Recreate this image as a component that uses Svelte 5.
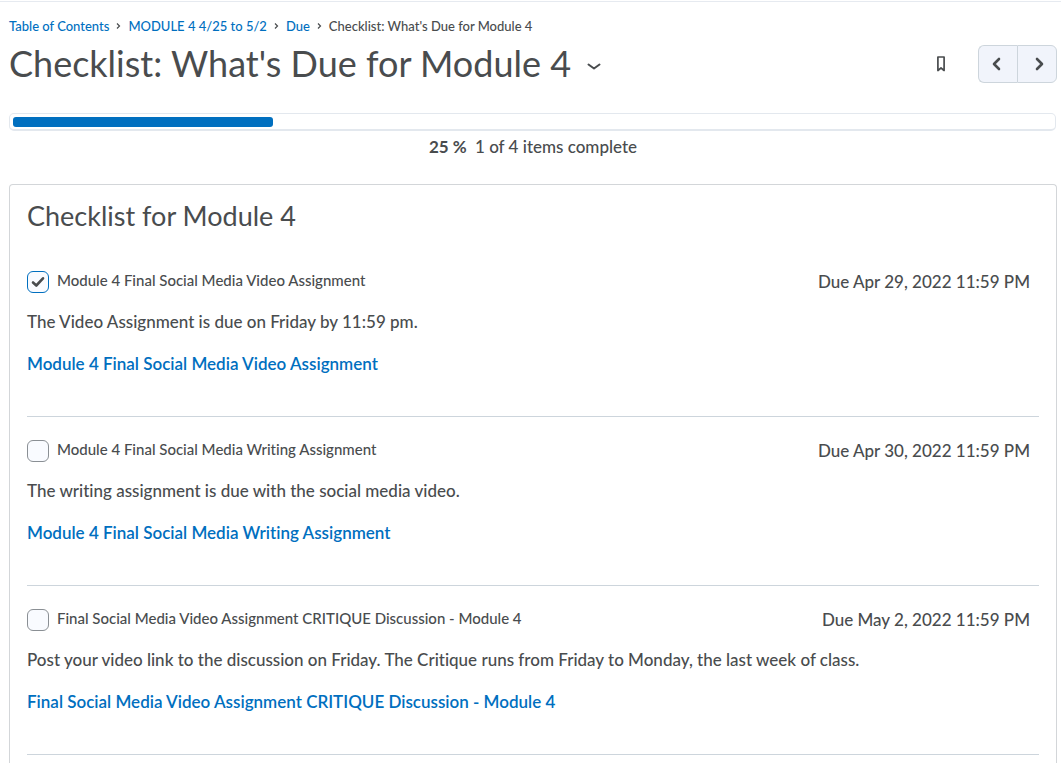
<div class="page">
  <header>
    <nav class="breadcrumbs" aria-label="Breadcrumb">
      {#each crumbs as crumb}
        <a href="#top">{crumb}</a>
        <svg width="5" height="8" viewBox="0 0 5 8">
          <path d="M1 1.500l2.500 2.500L1 6.500" fill="none" stroke="#494c4e" stroke-width="1.200"/>
        </svg>
      {/each}
      <span>{title}</span>
    </nav>

    <div class="titleBar">
      <h1>{title}</h1>
      <button class="plain actions" aria-label="Topic actions">
        <svg width="14" height="8" viewBox="0 0 14 8">
          <path d="M1.500 1.500L7 5.500l5.500-4" fill="none" stroke="#494c4e" stroke-width="2" stroke-linecap="round" stroke-linejoin="round"/>
        </svg>
      </button>
      <button class="plain bookmark" aria-label="Bookmark">
        <svg width="8" height="16" viewBox="0 0 8 16">
          <path d="M.9 1h6.200v13.500L4 12l-3.100 2.500z" fill="none" stroke="#494c4e" stroke-width="1.700" stroke-linejoin="round"/>
        </svg>
      </button>
      <div class="pager">
        <button aria-label="Previous">
          <svg width="10" height="14" viewBox="0 0 10 14">
            <path d="M7 2L2 7l5 5" fill="none" stroke="#494c4e" stroke-width="2.600" stroke-linecap="round" stroke-linejoin="round"/>
          </svg>
        </button>
        <button aria-label="Next">
          <svg width="10" height="14" viewBox="0 0 10 14">
            <path d="M3 2l5 5-5 5" fill="none" stroke="#494c4e" stroke-width="2.600" stroke-linecap="round" stroke-linejoin="round"/>
          </svg>
        </button>
      </div>
    </div>
  </header>

  <div class="track">
    <div class="bar" style={`width: ${percent}%`}></div>
  </div>
  <p class="summary"><strong>{percent} %</strong> <span>{complete} of {total} items complete</span></p>

  <main>
    <h2>Checklist for Module 4</h2>

    {#each items as item, i}
      <section>
        <div class="itemHeader">
          <input type="checkbox" id={`item${i}`} bind:checked={item.done} />
          <label for={`item${i}`}>{item.name}</label>
          <span class="due">Due {item.due}</span>
        </div>
        <p>{item.description}</p>
        <a href="#top">{item.name}</a>
      </section>
    {/each}
  </main>
</div>

<style>
  :global(body) {
    background: #fff;
    color: #494c4e;
    font-family: Lato, sans-serif;
    font-size: 17px;
    font-variant-ligatures: none;
    font-weight: 500;
    line-height: 24px;
    margin: 0;
  }

  .page {
    border-top: 1px solid #e6eaf0;
    box-sizing: border-box;
    display: flex;
    flex-direction: column;
    margin-top: 1px;
    min-height: calc(100vh - 1px);
    padding: 15px 4px 0 9px;
  }

  h1,
  h2,
  p {
    margin: 0;
  }

  a {
    color: #006fbf;
    text-decoration: none;
  }

  a:hover,
  a:focus {
    text-decoration: underline;
  }

  button {
    align-items: center;
    cursor: pointer;
    display: flex;
    justify-content: center;
    padding: 0;
  }

  .breadcrumbs {
    align-items: center;
    display: flex;
    font-size: 13px;
    gap: 7px;
    line-height: 18px;
  }

  .titleBar {
    align-items: center;
    display: flex;
    margin-top: 5px;
  }

  h1 {
    font-size: 36px;
    font-weight: 400;
    line-height: 46px;
    padding-bottom: 2px;
  }

  .plain {
    background: none;
    border: none;
    height: 38px;
    width: 46px;
  }

  .actions {
    padding-top: 6px;
  }

  .bookmark {
    margin-left: auto;
    margin-right: 14px;
  }

  .pager {
    display: flex;
  }

  .pager button {
    background: #f1f4fb;
    border: 1px solid #cdd5dc;
    border-radius: 6px;
    box-sizing: border-box;
    height: 38px;
    padding-left: 3px;
    width: 40px;
  }

  .pager button:first-child {
    border-bottom-right-radius: 0;
    border-right: none;
    border-top-right-radius: 0;
    padding: 0 3px 0 0;
    width: 39px;
  }

  .pager button:last-child {
    border-bottom-left-radius: 0;
    border-top-left-radius: 0;
  }

  .track {
    border: 1px solid #e3e8ee;
    border-bottom-width: 2px;
    border-radius: 5px;
    margin: 25px 1px 0 0;
    padding: 3px 3px 2px;
  }

  .bar {
    background: #006fbf;
    border-radius: 3px;
    height: 10px;
  }

  .summary {
    margin-top: 4px;
    text-align: center;
  }

  .summary span {
    margin-left: 4px;
  }

  main {
    border: 1px solid #d3d6d9;
    border-bottom: none;
    border-radius: 4px 4px 0 0;
    flex-grow: 1;
    margin-top: 25px;
    padding: 15px 17px 0;
  }

  h2 {
    font-size: 27px;
    font-weight: 400;
    line-height: 32px;
    margin-bottom: 16px;
  }

  section {
    border-bottom: 1px solid #cdd5dc;
    padding: 22px 0 40px;
  }

  .itemHeader {
    align-items: center;
    display: flex;
    margin-bottom: 16px;
  }

  section p {
    margin-bottom: 18px;
  }

  section > a {
    display: block;
    font-weight: 600;
    width: fit-content;
  }

  label {
    font-size: 15px;
    line-height: 20px;
    padding: 0 8px 4px;
  }

  .due {
    margin-left: auto;
    padding-right: 9px;
  }

  input {
    appearance: none;
    background: #f9fbff no-repeat center;
    border: 1px solid #8a8f94;
    border-radius: 6px;
    box-sizing: border-box;
    cursor: pointer;
    flex-shrink: 0;
    height: 22px;
    margin: 0;
    width: 22px;
  }

  input:checked {
    background-image: url("data:image/svg+xml,%3Csvg xmlns='http://www.w3.org/2000/svg' width='14' height='12' viewBox='0 0 14 12'%3E%3Cpath d='M2 6.500l3.300 3L12 2.300' fill='none' stroke='%23494c4e' stroke-width='2.600' stroke-linecap='round' stroke-linejoin='round'/%3E%3C/svg%3E");
    border-color: #006fbf;
  }
</style>

<script>
  const title = "Checklist: What's Due for Module 4"
  const crumbs = ['Table of Contents', 'MODULE 4 4/25 to 5/2', 'Due']

  let items = $state([
    {
      name: 'Module 4 Final Social Media Video Assignment',
      due: 'Apr 29, 2022 11:59 PM',
      description: 'The Video Assignment is due on Friday by 11:59 pm.',
      done: true
    },
    {
      name: 'Module 4 Final Social Media Writing Assignment',
      due: 'Apr 30, 2022 11:59 PM',
      description: 'The writing assignment is due with the social media video.',
      done: false
    },
    {
      name: 'Final Social Media Video Assignment CRITIQUE Discussion - Module 4',
      due: 'May 2, 2022 11:59 PM',
      description: 'Post your video link to the discussion on Friday. The Critique runs from Friday to Monday, the last week of class.',
      done: false
    }
  ])

  const total = 4
  let complete = $derived(items.filter(item => item.done).length)
  let percent = $derived(complete / total * 100)
</script>
